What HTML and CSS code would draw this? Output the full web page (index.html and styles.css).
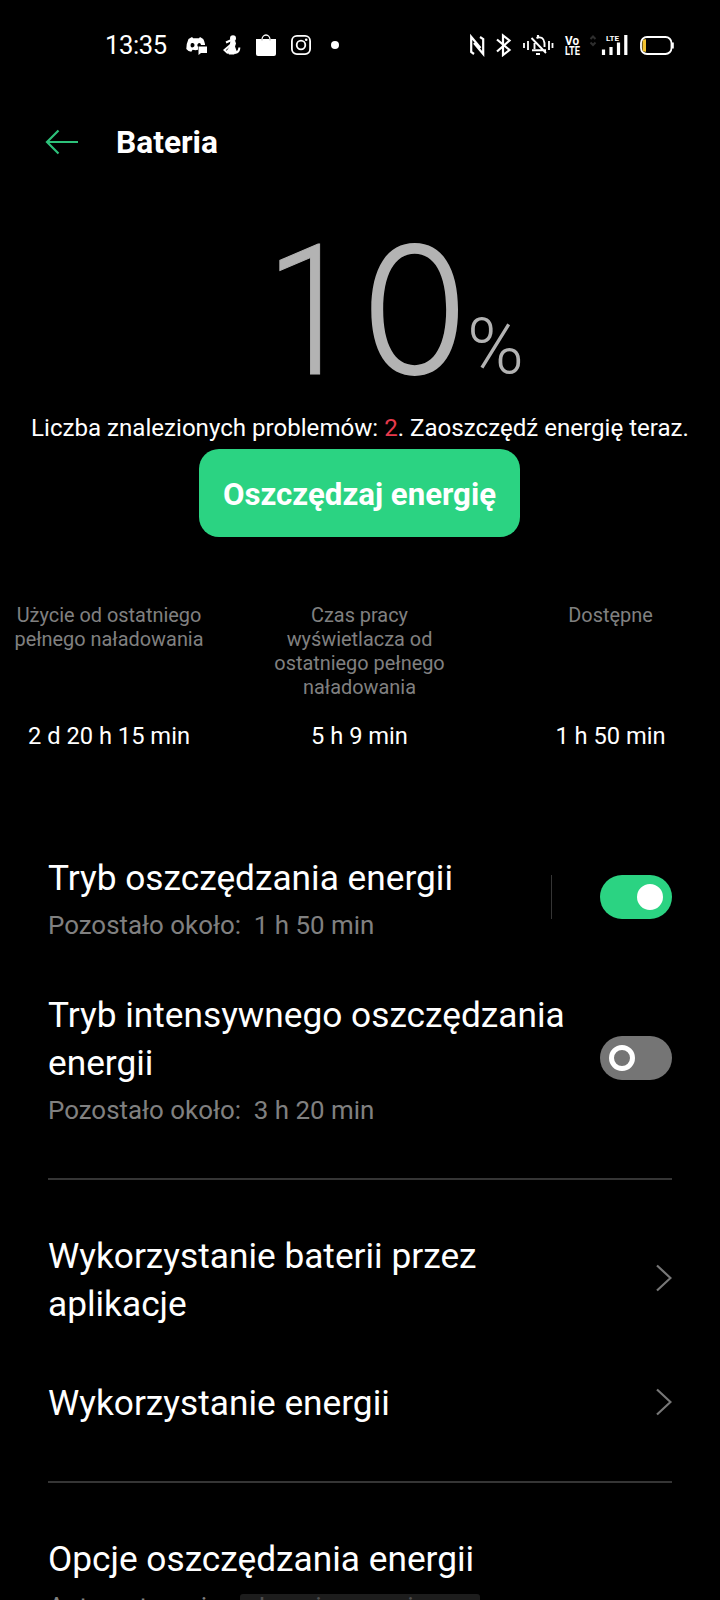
FILE: index.html
```html
<!DOCTYPE html>
<html lang="pl">
<head>
<meta charset="utf-8">
<title>Bateria</title>
<link rel="stylesheet" href="styles.css">
</head>
<body>
<main class="screen">
  <div class="status">
    <div class="status-left">
      <span class="clock">13:35</span>
      <svg class="i-discord" width="22" height="20" viewBox="0 0 22 20"><path fill="#fff" fill-rule="evenodd" d="M6 1 2.500 3Q.5 7 .3 13q2 2.500 5 2.800l1.300-2q3 .8 5.400 0V9h7V8q-.6-3-1.800-5L14 1l-1 1.200H7.200zM6.900 7a2 2.200 0 1 0 .1 4.300A2 2.200 0 0 0 6.900 7zm6.300 0a2 2.200 0 0 0-1.200 3.800V9h3Q14.900 7 13.200 7z"/><path fill="#fff" d="M12.500 10.500H21V17h-6l-2.500 2z"/></svg>
      <svg class="i-figure" width="18" height="20" viewBox="0 0 18 20"><circle cx="10" cy="3.200" r="3" fill="#fff"/><path fill="#fff" d="M7.500 5.500h4.500l1 3-1 3 2 5.500-3 2.500H6L3.500 16l3-4.500z"/><path d="M8.500 5 3 7.500M8 9.500l-6.500 5.500L5 18.300M12 18q4.500-1.200 4.300-5.500" fill="none" stroke="#fff" stroke-width="2"/></svg>
      <svg class="i-bag" width="20" height="23" viewBox="0 0 20 23"><path fill="#fff" d="M0 5h20v15a2 2 0 0 1-2 2H2a2 2 0 0 1-2-2z"/><path d="M6 7V5.500a4 4.500 0 0 1 8 0V7" fill="none" stroke="#fff" stroke-width="1.300"/><path d="M6 5v1.500M14 5v1.500" stroke="#aaa" stroke-width="1"/></svg>
      <svg class="i-insta" width="20" height="20" viewBox="0 0 20 20"><g fill="none" stroke="#fff" stroke-width="1.800"><rect x=".9" y=".9" width="18.200" height="18.200" rx="5"/><circle cx="10" cy="10" r="4.300"/></g><circle cx="15.200" cy="4.800" r="1.300" fill="#fff"/></svg>
      <span class="dot"></span>
    </div>
    <svg class="status-right" width="210" height="24" viewBox="465 33 210 24">
      <g fill="none" stroke="#fff" stroke-width="2.200">
        <path d="m474 54-2.800-2V36.800L480.500 48M480 37l3.200 2v15L474 43"/>
        <path d="m497 39.500 12.500 10.500-6.500 5V35.500l6.500 5L497 51.500"/>
        <path d="M524 43v5M528 41v9M549 41v9M552.500 43v5" stroke-width="1.800"/>
        <path d="M532 50.200h14M534.500 49v-6M536.500 38q7-2.500 8 5v4M531.500 38l14.500 15" stroke-width="1.900"/>
        <path d="M538 37V35M536 54h4"/>
      </g>
      <text class="tiny" x="565" y="44.500" textLength="14" lengthAdjust="spacingAndGlyphs">Vo</text>
      <text class="tiny" x="565" y="55" textLength="15" lengthAdjust="spacingAndGlyphs">LTE</text>
      <path d="m590.500 39 2.500-2.500 2.500 2.500m-5 3.500 2.500 2.500 2.500-2.500" fill="none" stroke="#2e2e2e" stroke-width="2"/>
      <text class="mini" x="606" y="41" textLength="13" lengthAdjust="spacingAndGlyphs">LTE</text>
      <path d="M603.500 49.500V55M611 47v8M618.500 42.500V55M625.800 35v20" stroke="#fff" stroke-width="3.200"/>
      <rect x="641" y="37" width="30.500" height="17" rx="6" fill="none" stroke="#fff" stroke-width="1.800"/>
      <path d="M672.800 42.500v6" stroke="#fff" stroke-width="2"/>
      <path d="M646 39.200v12.500h-1a2.500 2.500 0 0 1-2.500-2.500v-7.500a2.500 2.500 0 0 1 2.500-2.500z" fill="#f2c230"/>
    </svg>
  </div>
  <header class="header">
    <svg width="34" height="26" viewBox="0 0 34 26"><path d="M13.500 1.500 2 13l11.500 11.500M2 13h31" fill="none" stroke="#2dc17a" stroke-width="2.200"/></svg>
    <h1>Bateria</h1>
  </header>
  <section class="level"><span class="one">1</span><span class="zero">0</span><span class="pct">%</span></section>
  <p class="notice">Liczba znalezionych problemów: <span class="red">2</span>. Zaoszczędź energię teraz.</p>
  <button class="save">Oszczędzaj energię</button>
  <section class="stats">
    <div class="stat first"><p>Użycie od ostatniego<br>pełnego naładowania</p><b>2 d 20 h 15 min</b></div>
    <div class="stat mid"><p>Czas pracy<br>wyświetlacza od<br>ostatniego pełnego<br>naładowania</p><b>5 h 9 min</b></div>
    <div class="stat last"><p>Dostępne</p><b>1 h 50 min</b></div>
  </section>
  <section class="modes">
    <div class="row mode-a">
      <div class="text"><h2>Tryb oszczędzania energii</h2><p>Pozostało około:&nbsp; 1 h 50 min</p></div>
      <span class="sep"></span><span class="toggle on"></span>
    </div>
    <div class="row mode-b">
      <div class="text"><h2>Tryb intensywnego oszczędzania<br>energii</h2><p>Pozostało około:&nbsp; 3 h 20 min</p></div>
      <span class="toggle"></span>
    </div>
  </section>
  <section class="links">
    <div class="row link-a"><h2>Wykorzystanie baterii przez<br>aplikacje</h2><svg class="chevron" width="16" height="28" viewBox="0 0 16 28"><path d="m1 1.500 13.500 12.500L1 26.500" fill="none" stroke="#777" stroke-width="2.200"/></svg></div>
    <div class="row link-b"><h2>Wykorzystanie energii</h2><svg class="chevron" width="16" height="28" viewBox="0 0 16 28"><path d="m1 1.500 13.500 12.500L1 26.500" fill="none" stroke="#777" stroke-width="2.200"/></svg></div>
  </section>
  <section class="options"><h2>Opcje oszczędzania energii</h2><p>Automatycznie wykonaj operacje</p></section>
  <div class="navbar"></div>
</main>
</body>
</html>
```
FILE: styles.css
```css
*, *::before { box-sizing: border-box; margin: 0; padding: 0; }
body { background: #000; color: #fff; font-family: Roboto, sans-serif; }
.screen { position: relative; width: 720px; height: 1600px; overflow: hidden; }
.status { height: 90px; display: flex; justify-content: space-between; padding: 33px 45px 0 105px; }
.status-left { display: flex; align-items: center; height: 24px; }
.clock { width: 81px; font-size: 25.6px; line-height: 24px; letter-spacing: -0.4px; }
.i-discord { margin-top: 2px; }
.i-figure { margin-left: 15px; }
.i-bag { margin-left: 15px; }
.i-insta { margin-left: 15px; }
.dot { width: 8px; height: 8px; border-radius: 50%; background: #fff; margin-left: 20px; }
.tiny { font: bold 13px Roboto, sans-serif; fill: #fff; }
.mini { font: bold 8px Roboto, sans-serif; fill: #fff; }
.header { height: 104px; display: flex; align-items: center; padding: 0 45px; gap: 37px; }
h1 { font-size: 31.7px; line-height: 40px; font-weight: 700; padding-top: 1px; }
.level { height: 212px; display: flex; color: #b3b3b3; font-weight: 300; line-height: 232px; padding-left: 266px; }
.one { width: 93px; font-size: 182px; line-height: 235px; transform: scaleX(.87); transform-origin: left center; -webkit-text-stroke: 1px #b3b3b3; }
.zero { width: 108px; font-family: Inter, sans-serif; font-size: 177px; padding-left: 1px; }
.pct { font-size: 77px; line-height: 306px; }
.notice { height: 43px; line-height: 45px; text-align: center; font-size: 24.1px; white-space: nowrap; }
.red { color: #e63a4c; }
.save { display: block; width: 321px; height: 88px; margin: 0 auto 67px 199px; padding-top: 2px; border: 0; border-radius: 20px; background: #2bd382; color: #fff; font: 700 31.2px/88px Roboto, sans-serif; white-space: nowrap; }
.stats { height: 237px; display: flex; text-align: center; }
.stat { display: flex; flex-direction: column; }
.stat p { height: 119px; font-size: 19.9px; line-height: 24px; color: #808080; white-space: nowrap; }
.stat b { font-weight: 400; font-size: 23.7px; line-height: 26px; white-space: nowrap; }
.first { width: 218px; }
.mid { width: 283px; }
.last { width: 219px; }
.row { display: flex; align-items: center; }
h2 { font-size: 35.25px; line-height: 48px; font-weight: 400; white-space: nowrap; }
.modes { margin: 0 48px; height: 339px; border-bottom: 2px solid #353535; padding-top: 12px; }
.modes .text { flex: 1; }
.modes h2 { padding-top: 1px; }
.modes p { font-size: 25.9px; line-height: 32px; margin-top: 7px; color: #808080; }
.mode-a { height: 87px; margin-bottom: 50px; }
.mode-b { height: 135px; }
.sep { width: 1px; height: 44px; background: #353535; margin-right: 48px; }
.toggle { width: 72px; height: 44px; border-radius: 22px; background: #757575; padding: 9px; }
.toggle::before { content: ""; display: block; width: 26px; height: 26px; border: 5px solid #fff; border-radius: 50%; }
.toggle.on { background: #2bd382; }
.toggle.on::before { margin-left: 28px; background: #fff; }
.links { margin: 0 48px; height: 303px; border-bottom: 2px solid #353535; padding-top: 51px; }
.links .row { justify-content: space-between; }
.chevron { margin-bottom: 2px; }
.link-a { height: 96px; margin-bottom: 52px; }
.link-a h2 { padding-top: 2px; }
.link-b { height: 48px; }
.options { padding: 52px 48px 0; }
.options p { font-size: 26px; line-height: 32px; color: #808080; margin-top: 8px; white-space: nowrap; }
.navbar { position: absolute; left: 240px; top: 1594px; width: 240px; height: 6px; border-radius: 3px 3px 0 0; background: rgba(48, 48, 48, .6); }
```
